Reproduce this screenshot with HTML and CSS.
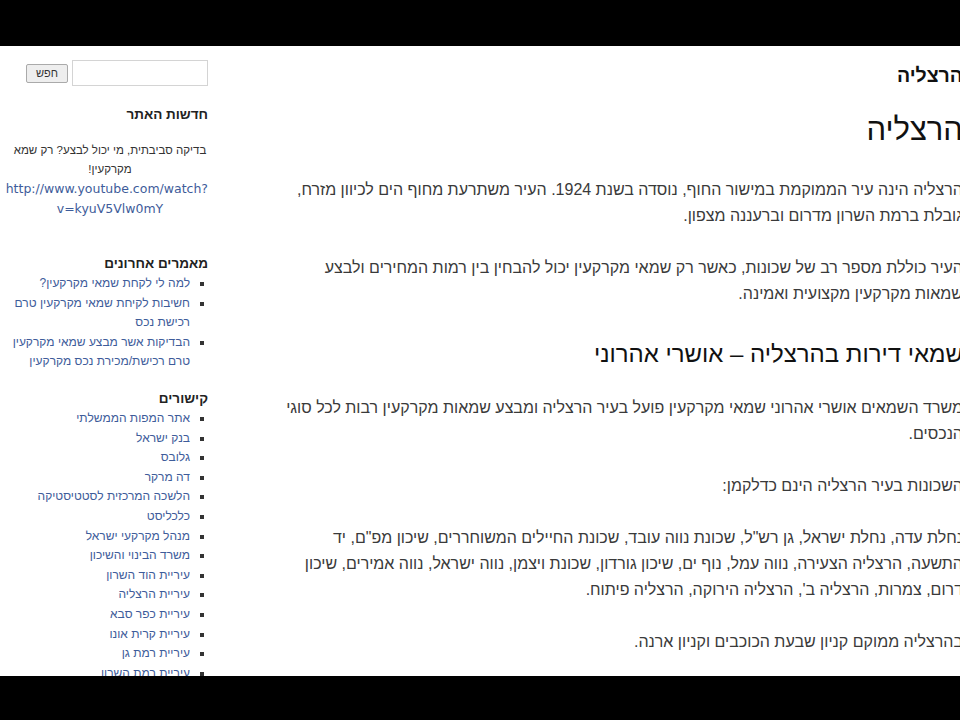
FILE: index.html
```html
<!DOCTYPE html>
<html lang="he">
<head>
    <meta charset="UTF-8">
    <title>הרצליה</title>
    <link rel="stylesheet" href="styles.css">
</head>
<body>
    <div class="screen">
        <aside class="sidebar">
            <form class="search">
                <input type="text" class="search-input">
                <button type="button" class="search-btn">חפש</button>
            </form>

            <div class="widget news">
                <h3>חדשות האתר</h3>
                <p>בדיקה סביבתית, מי יכול לבצע? רק שמא מקרקעין!</p>
                <a href="#">http://www.youtube.com/watch?<wbr>v=kyuV5Vlw0mY</a>
            </div>

            <div class="widget">
                <h3>מאמרים אחרונים</h3>
                <ul>
                    <li><a href="#">למה לי לקחת שמאי מקרקעין?</a></li>
                    <li><a href="#">חשיבות לקיחת שמאי מקרקעין טרם רכישת נכס</a></li>
                    <li><a href="#">הבדיקות אשר מבצע שמאי מקרקעין טרם רכישת/מכירת נכס מקרקעין</a></li>
                </ul>
            </div>

            <div class="widget">
                <h3>קישורים</h3>
                <ul>
                    <li><a href="#">אתר המפות הממשלתי</a></li>
                    <li><a href="#">בנק ישראל</a></li>
                    <li><a href="#">גלובס</a></li>
                    <li><a href="#">דה מרקר</a></li>
                    <li><a href="#">הלשכה המרכזית לסטטיסטיקה</a></li>
                    <li><a href="#">כלכליסט</a></li>
                    <li><a href="#">מנהל מקרקעי ישראל</a></li>
                    <li><a href="#">משרד הבינוי והשיכון</a></li>
                    <li><a href="#">עיריית הוד השרון</a></li>
                    <li><a href="#">עיריית הרצליה</a></li>
                    <li><a href="#">עיריית כפר סבא</a></li>
                    <li><a href="#">עיריית קרית אונו</a></li>
                    <li><a href="#">עיריית רמת גן</a></li>
                    <li><a href="#">עיריית רמת השרון</a></li>
                </ul>
            </div>
        </aside>

        <main class="content">
            <div class="site-title">הרצליה</div>
            <h1>הרצליה</h1>

            <p>הרצליה הינה עיר הממוקמת במישור החוף, נוסדה בשנת 1924. העיר משתרעת מחוף הים לכיוון מזרח, גובלת ברמת השרון מדרום וברעננה מצפון.</p>

            <p>העיר כוללת מספר רב של שכונות, כאשר רק שמאי מקרקעין יכול להבחין בין רמות המחירים ולבצע שמאות מקרקעין מקצועית ואמינה.</p>

            <h2>שמאי דירות בהרצליה – אושרי אהרוני</h2>

            <p>משרד השמאים אושרי אהרוני שמאי מקרקעין פועל בעיר הרצליה ומבצע שמאות מקרקעין רבות לכל סוגי הנכסים.</p>

            <p>השכונות בעיר הרצליה הינם כדלקמן:</p>

            <p>נחלת עדה, נחלת ישראל, גן רש"ל, שכונת נווה עובד, שכונת החיילים המשוחררים, שיכון מפ"ם, יד התשעה, הרצליה הצעירה, נווה עמל, נוף ים, שיכון גורדון, שכונת ויצמן, נווה ישראל, נווה אמירים, שיכון דרום, צמרות, הרצליה ב', הרצליה הירוקה, הרצליה פיתוח.</p>

            <p>בהרצליה ממוקם קניון שבעת הכוכבים וקניון ארנה.</p>
        </main>
    </div>
</body>
</html>
```

FILE: styles.css
```css
* {
    box-sizing: border-box;
}

body {
    margin: 0;
    height: 720px;
    overflow: hidden;
    background: #000;
    font-family: "Liberation Sans", Arial, sans-serif;
}

.screen {
    margin-top: 46px;
    height: 630px;
    background: #fff;
    overflow: hidden;
    display: flex;
}

/* sidebar */

.sidebar {
    flex: none;
    width: 216px;
    padding: 14px 8px 0 12px;
    direction: rtl;
    font-size: 11.5px;
    color: #333;
}

.search {
    display: flex;
    align-items: center;
    gap: 4px;
}

.search-input {
    width: 136px;
    height: 26px;
    border: 1px solid #d4d4d4;
    background: #fff;
    margin: 0;
}

.search-btn {
    width: 42px;
    height: 19px;
    padding: 0;
    font-size: 11px;
    font-family: "Liberation Sans", Arial, sans-serif;
    color: #333;
    background: #eee;
    border: 1px solid #aaa;
    border-radius: 2px;
}

.widget h3 {
    margin: 0;
    font-size: 13.5px;
    font-weight: bold;
    color: #222;
    line-height: 20px;
}

.widget {
    margin-bottom: 17px;
}

.news {
    margin-top: 19px;
    margin-bottom: 35px;
    text-align: center;
}

.news h3 {
    text-align: right;
    margin-bottom: 16px;
}

.news p {
    margin: 0;
    line-height: 19px;
}

.news a {
    display: block;
    line-height: 20px;
    white-space: nowrap;
    font-family: "DejaVu Sans", Verdana, sans-serif;
    font-size: 12.5px;
}

.news a wbr {
    display: block;
}

.widget ul {
    margin: 0;
    padding: 0 18px 0 0;
    list-style: square;
    color: #333;
}

.widget li {
    line-height: 19.6px;
    font-size: 12px;
}

a {
    color: #3e5c9a;
    text-decoration: none;
}

/* main content */

.content {
    flex: none;
    width: 684px;
    margin-left: 63px;
    direction: rtl;
    font-size: 16px;
    line-height: 26px;
    color: #3a3a3a;
}

.site-title {
    margin-top: 17px;
    font-size: 19.5px;
    font-weight: bold;
    color: #111;
    line-height: 24px;
}

h1 {
    margin: 23px 0 27px;
    font-size: 31px;
    font-weight: normal;
    line-height: 40px;
    color: #111;
}

h2 {
    margin: 32px 0 26px;
    font-size: 24px;
    font-weight: normal;
    line-height: 30px;
    color: #111;
}

.content p {
    margin: 0 0 26px;
}
```
